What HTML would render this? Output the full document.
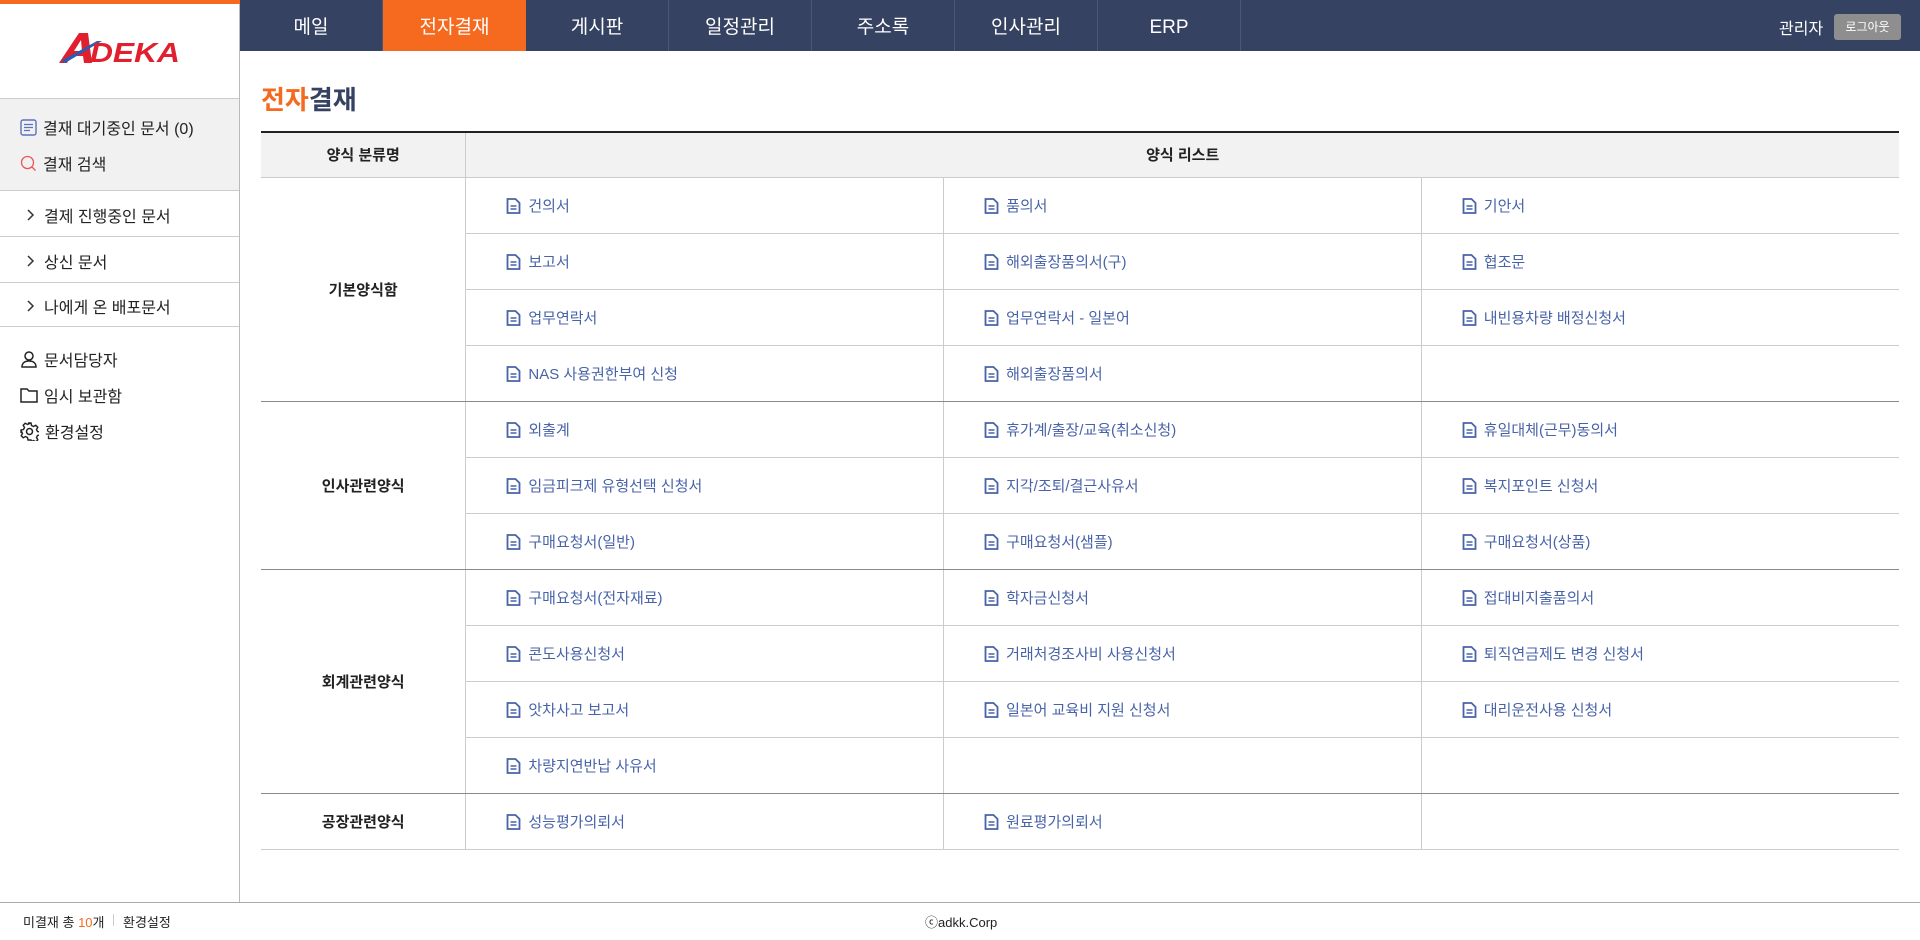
<!DOCTYPE html>
<html><head><meta charset="utf-8"><style>
*{margin:0;padding:0;box-sizing:border-box}
body{width:1920px;height:940px;position:relative;background:#fff;font-family:"Liberation Sans","Noto Sans CJK KR",sans-serif;color:#222;overflow:hidden}
#side{position:absolute;left:0;top:0;width:240px;height:902px;border-right:1px solid #bbb}
#topo{position:absolute;left:0;top:0;width:240px;height:4px;background:#f56a1e}
#logo{position:absolute;left:57px;top:31px;width:125px;height:34px}
.grey{position:absolute;left:0;top:98px;width:239px;height:93px;background:#f1f1f1;border-top:1px solid #ccc;border-bottom:1px solid #ccc}
.si{position:absolute;left:20px;font-size:16px;color:#222;display:flex;align-items:center;gap:6px;white-space:nowrap}
.hl{position:absolute;left:0;width:239px;height:1px;background:#ccc}
#nav{position:absolute;left:240px;top:0;width:1680px;height:51px;background:#364262}
.ni{position:absolute;top:0;height:51px;width:143px;color:#fff;font-size:19px;text-align:center;padding-top:17px;line-height:22px;border-right:1px solid #4d5878}
.ni.on{background:#f56a1e;border-right:none}
h1{position:absolute;left:261px;top:80px;font-size:26px;font-weight:bold;color:#364262}
h1 span{color:#f56a1e}
table{position:absolute;left:261px;top:131px;width:1638px;border-collapse:collapse;border-top:2px solid #222}
th{background:#f2f2f2;height:45px;font-size:15px;font-weight:bold;border-bottom:1px solid #ccc;border-left:1px solid #ccc}
th:first-child{border-left:none;width:205px}
td{height:56px;border-bottom:1px solid #ccc;border-left:1px solid #ccc;font-size:15px;color:#4863a8;padding-left:40px;width:478px}
td.c{color:#222;font-weight:bold;text-align:center;padding:0;border-left:none;width:205px}
tr.g td{border-bottom:1px solid #888}
td svg{vertical-align:-3px;margin-right:7px}
#foot{position:absolute;left:0;top:902px;width:1920px;height:38px;border-top:1px solid #aaa;font-size:13px}
</style></head><body>
<div id="nav">
<div class="ni" style="left:0">메일</div>
<div class="ni on" style="left:143px">전자결재</div>
<div class="ni" style="left:286px">게시판</div>
<div class="ni" style="left:429px">일정관리</div>
<div class="ni" style="left:572px">주소록</div>
<div class="ni" style="left:715px">인사관리</div>
<div class="ni" style="left:858px">ERP</div>
<div style="position:absolute;left:1539px;top:15px;color:#fff;font-size:16px">관리자</div>
<div style="position:absolute;left:1594px;top:14px;width:67px;height:26px;background:#8e8e8e;border-radius:3px;color:#fff;font-size:12px;text-align:center;line-height:26px">로그아웃</div>
</div>
<div id="side">
<div id="topo"></div>
<svg id="logo" viewBox="0 0 125 34"><path d="M2 32 L22 2 L31 2 L35 32 L27 32 L26 25 L14 25 L10 32Z M17 20 L25 20 L24 9Z" fill="#e0202e"/><path d="M4 30 L40 10 L45 10 L8 32Z" fill="#2a5cb0"/><text x="33" y="31" font-family="Liberation Sans" font-weight="bold" font-style="italic" font-size="28" fill="#e0202e" textLength="90" lengthAdjust="spacingAndGlyphs">DEKA</text></svg>
<div class="grey"></div>
<div class="si" style="top:115px"><svg width="17" height="17" viewBox="0 0 17 17"><rect x="1" y="1" width="15" height="15" rx="2" fill="none" stroke="#5a72c0" stroke-width="1.4"/><path d="M4 5.5h9M4 8.5h9M4 11.5h6" stroke="#5a72c0" stroke-width="1.3"/></svg>결재 대기중인 문서 (0)</div>
<div class="si" style="top:151px"><svg width="17" height="17" viewBox="0 0 17 17"><circle cx="7.5" cy="7.5" r="6" fill="none" stroke="#e55" stroke-width="1.3"/><path d="M12 12l3.5 3.5" stroke="#e55" stroke-width="1.3"/></svg>결재 검색</div>
<div class="si" style="top:203px;left:24px"><svg width="14" height="14" viewBox="0 0 14 14"><path d="M4 2l5 5-5 5" fill="none" stroke="#333" stroke-width="1.5"/></svg>결제 진행중인 문서</div>
<div class="hl" style="top:236px"></div>
<div class="si" style="top:249px;left:24px"><svg width="14" height="14" viewBox="0 0 14 14"><path d="M4 2l5 5-5 5" fill="none" stroke="#333" stroke-width="1.5"/></svg>상신 문서</div>
<div class="hl" style="top:282px"></div>
<div class="si" style="top:294px;left:24px"><svg width="14" height="14" viewBox="0 0 14 14"><path d="M4 2l5 5-5 5" fill="none" stroke="#333" stroke-width="1.5"/></svg>나에게 온 배포문서</div>
<div class="hl" style="top:326px"></div>
<div class="si" style="top:347px"><svg width="18" height="18" viewBox="0 0 18 18"><circle cx="9" cy="6" r="4" fill="none" stroke="#222" stroke-width="1.5"/><path d="M2 17c0-4 3-6 7-6s7 2 7 6z" fill="none" stroke="#222" stroke-width="1.5"/></svg>문서담당자</div>
<div class="si" style="top:383px"><svg width="18" height="18" viewBox="0 0 18 18"><path d="M1 3h6l2 2h8v11H1z" fill="none" stroke="#222" stroke-width="1.5"/></svg>임시 보관함</div>
<div class="si" style="top:419px"><svg width="19" height="19" viewBox="0 0 19 19"><circle cx="9.5" cy="9.5" r="3" fill="none" stroke="#222" stroke-width="1.5"/><path d="M8 1h3l.5 2.5 2 1 2.3-1.3 2 2-1.3 2.3 1 2 2.5.5v3l-2.5.5-1 2 1.3 2.3-2 2-2.3-1.3-2 1L11 18H8l-.5-2.5-2-1-2.3 1.3-2-2 1.3-2.3-1-2L1 11V8l2.5-.5 1-2L3.2 3.2l2-2 2.3 1.3 2-1z" fill="none" stroke="#222" stroke-width="1.4"/></svg>환경설정</div>
</div>
<h1><span>전자</span>결재</h1>
<table>
<tr><th>양식 분류명</th><th colspan="3">양식 리스트</th></tr>
<tr><td class="c" rowspan="4" style="border-bottom:1px solid #888">기본양식함</td><td>§건의서</td><td>§품의서</td><td>§기안서</td></tr>
<tr><td>§보고서</td><td>§해외출장품의서(구)</td><td>§협조문</td></tr>
<tr><td>§업무연락서</td><td>§업무연락서 - 일본어</td><td>§내빈용차량 배정신청서</td></tr>
<tr class="g"><td>§NAS 사용권한부여 신청</td><td>§해외출장품의서</td><td></td></tr>
<tr><td class="c" rowspan="3" style="border-bottom:1px solid #888">인사관련양식</td><td>§외출계</td><td>§휴가계/출장/교육(취소신청)</td><td>§휴일대체(근무)동의서</td></tr>
<tr><td>§임금피크제 유형선택 신청서</td><td>§지각/조퇴/결근사유서</td><td>§복지포인트 신청서</td></tr>
<tr class="g"><td>§구매요청서(일반)</td><td>§구매요청서(샘플)</td><td>§구매요청서(상품)</td></tr>
<tr><td class="c" rowspan="4" style="border-bottom:1px solid #888">회계관련양식</td><td>§구매요청서(전자재료)</td><td>§학자금신청서</td><td>§접대비지출품의서</td></tr>
<tr><td>§콘도사용신청서</td><td>§거래처경조사비 사용신청서</td><td>§퇴직연금제도 변경 신청서</td></tr>
<tr><td>§앗차사고 보고서</td><td>§일본어 교육비 지원 신청서</td><td>§대리운전사용 신청서</td></tr>
<tr class="g"><td>§차량지연반납 사유서</td><td></td><td></td></tr>
<tr><td class="c">공장관련양식</td><td>§성능평가의뢰서</td><td>§원료평가의뢰서</td><td></td></tr>
</table>
<div id="foot">
<div style="position:absolute;left:23px;top:9px">미결재 총 <span style="color:#f56a1e">10</span>개</div>
<div style="position:absolute;left:113px;top:11px;width:1px;height:12px;background:#ccc"></div>
<div style="position:absolute;left:123px;top:9px">환경설정</div>
<div style="position:absolute;left:925px;top:9px">ⓒadkk.Corp</div>
</div>
<script>
document.querySelectorAll('td').forEach(function(t){if(t.textContent.charAt(0)=='§'){t.innerHTML='<svg width="15" height="16" viewBox="0 0 15 16"><path d="M1.5 1h8l4 4v10h-12z" fill="none" stroke="#4863a8" stroke-width="1.8"/><path d="M4.5 8h6M4.5 11h6" stroke="#4863a8" stroke-width="1.6"/></svg>'+t.textContent.slice(1);}});
</script>
</body></html>
